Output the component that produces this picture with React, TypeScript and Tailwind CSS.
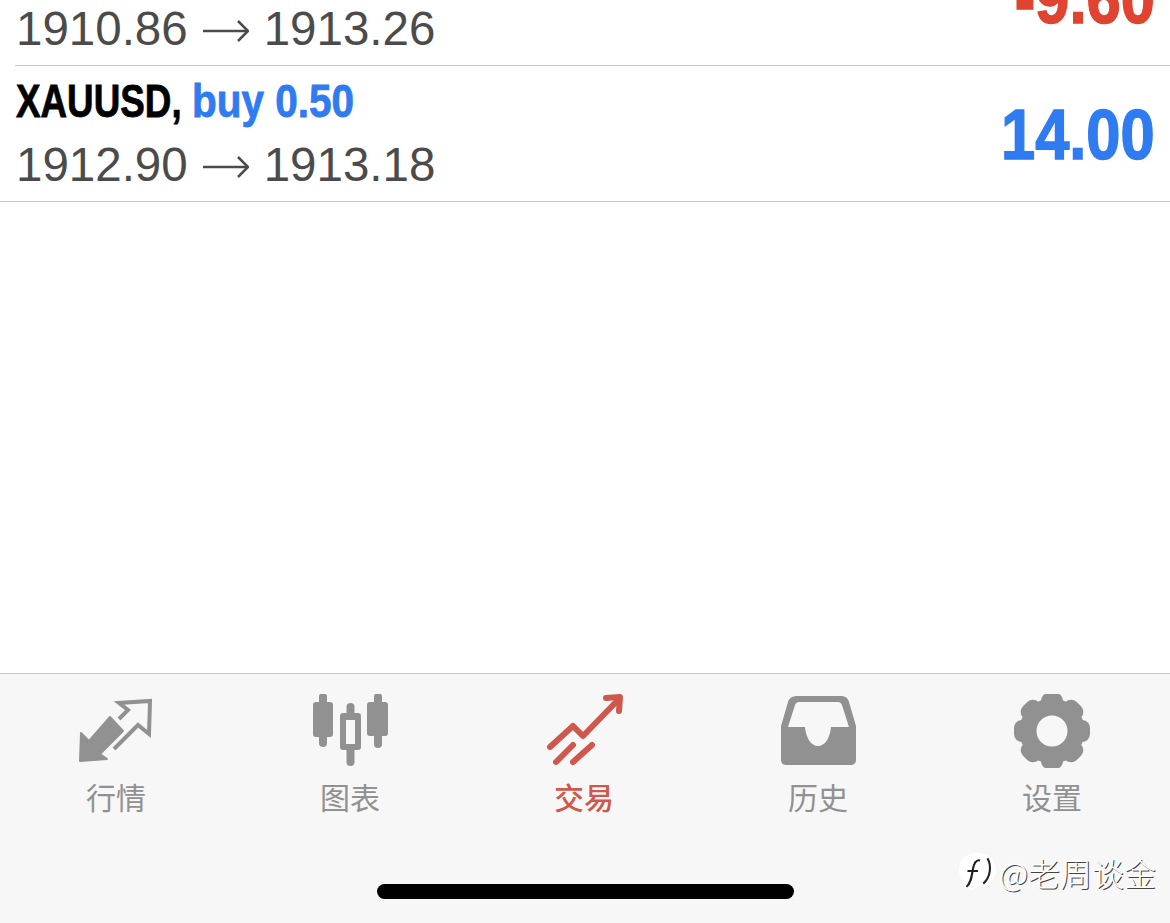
const sans = "font-['Liberation_Sans',Arial,sans-serif]"

const Arrow = () => (
  <svg width="46" height="24" viewBox="0 0 46 24" fill="none" stroke="#4b4b4b" strokeWidth="2.5" className="mx-[15px] mb-[12px] shrink-0">
    <path d="M0 12H44" />
    <path d="M35 2 45 12 35 22" />
  </svg>
)

const Trade = ({ symbol, side, from, to, profit, profitColor, inset, height }: { symbol: string; side: string; from: string; to: string; profit: string; profitColor: string; inset?: boolean; height: string }) => {
  return (
    <div className={`${height} relative overflow-hidden flex flex-col justify-end`}>
      <div className="flex justify-between items-end pl-[15px] pr-[15px]">
        <div className="flex flex-col">
          <div className="h-[64px] pb-[11px] flex items-end whitespace-nowrap text-[46px] leading-[52px] font-bold [-webkit-text-stroke:0.8px]">
            <span className="inline-block w-[177px] ml-[1px] mr-[-1px] origin-left scale-x-[0.8] text-black">{symbol}</span>
            <span className="inline-block origin-left scale-x-[0.88] text-[#2f7bf0]">{side}</span>
          </div>
          <div className="h-[63px] pl-[1px] pb-[10px] flex items-end whitespace-nowrap text-[47.5px] leading-[52px] text-[#4b4b4b]">
            <span>{from}</span>
            <Arrow />
            <span>{to}</span>
          </div>
        </div>
        <div className={`mb-[30px] origin-right scale-x-[0.865] text-[71px] leading-[72px] font-bold [-webkit-text-stroke:1.5px] ${profitColor}`}>{profit}</div>
      </div>
      <div className={`h-px shrink-0 bg-[#c6c6c6] ${inset ? 'ml-[15px]' : ''}`}></div>
    </div>
  )
}

const Markets = () => (
  <svg width="80" height="74" viewBox="77 694 80 74" fill="#919191">
    <path d="M80 761 81 733 89 741 110 717 123 731 100 754 107 759Z" stroke="#919191" strokeWidth="2" strokeLinejoin="round" />
    <path d="M119 719 128 710 119 703 150 701 149 734 138 725 114 749" fill="none" stroke="#919191" strokeWidth="4" />
  </svg>
)

const Charts = () => (
  <svg width="80" height="74" viewBox="311 694 80 74" fill="#919191">
    <rect x="319" y="693" width="8" height="54" rx="4" />
    <rect x="313" y="702" width="20" height="35" rx="3" />
    <rect x="346.500" y="703" width="8" height="14" rx="4" />
    <rect x="346.500" y="745" width="8" height="21" rx="4" />
    <path fillRule="evenodd" d="M343 713H358a3 3 0 0 1 3 3V747a3 3 0 0 1-3 3H343a3 3 0 0 1-3-3V716a3 3 0 0 1 3-3ZM346 720V744H355V720Z" />
    <rect x="374" y="693" width="8" height="55" rx="4" />
    <rect x="367" y="702" width="21" height="34" rx="3" />
  </svg>
)

const Trading = () => (
  <svg width="80" height="74" viewBox="545 694 80 74" fill="none" stroke="#d0574c" strokeWidth="6" strokeLinecap="round" strokeLinejoin="round">
    <path d="M550 747 573 726 583 736 618 700" />
    <path d="M606 698 620 697 619 711" />
    <path d="M556 762 573 745" />
    <path d="M573 762 592 745" />
  </svg>
)

const History = () => (
  <svg width="80" height="74" viewBox="779 694 80 74" fill="#919191">
    <path fillRule="evenodd" d="M797 696H841C845 696 848 698 849 702L856 726V760C856 763 854 765 851 765H786C783 765 781 763 781 760V726L788 702C789 698 793 696 797 696ZM799 702C797 702 796 703 795 705L788 727H805C806 738 811 746 818 746C825 746 830 738 831 727H849L842 705C841 703 840 702 838 702Z" />
  </svg>
)

const Settings = () => (
  <svg width="80" height="74" viewBox="1013 694 80 74" fill="#919191">
    <circle cx="1052" cy="731" r="24" fill="none" stroke="#919191" strokeWidth="17" />
    {[0, 45, 90, 135, 180, 225, 270, 315].map((a) => (
      <rect key={a} x="1041" y="693" width="22" height="16" rx="8" transform={`rotate(${a} 1052 731)`} />
    ))}
  </svg>
)

const tabs = [
  { label: '行情', icon: <Markets /> },
  { label: '图表', icon: <Charts /> },
  { label: '交易', icon: <Trading />, active: true },
  { label: '历史', icon: <History /> },
  { label: '设置', icon: <Settings /> },
]

const App = () => {
  return (
    <div className={`${sans} relative w-[1170px] h-[923px] overflow-hidden bg-white flex flex-col`}>
      <Trade height="h-[66px]" inset symbol="XAUUSD," side="sell 0.50" from="1910.86" to="1913.26" profit="-9.60" profitColor="text-[#e0432f]" />
      <Trade height="h-[136px]" symbol="XAUUSD," side="buy 0.50" from="1912.90" to="1913.18" profit="14.00" profitColor="text-[#2f7bf0]" />
      <div className="flex-1"></div>
      <div className="h-[250px] border-t border-[#c6c6c6] bg-[#f7f7f7] flex flex-col">
        <div className="grid grid-cols-5 pt-[20px]">
          {tabs.map((t) => (
            <div key={t.label} className="flex flex-col items-center">
              {t.icon}
              <span className={`mt-[10px] mr-[2px] text-[30px] leading-[36px] font-['Noto_Sans_CJK_SC','Noto_Sans_CJK_JP',sans-serif] ${t.active ? 'font-medium text-[#d0574c]' : 'text-[#919191]'}`}>{t.label}</span>
            </div>
          ))}
        </div>
        <div className="mt-[70px] mx-auto w-[417px] h-[15px] rounded-full bg-black"></div>
      </div>
      {/* watermark over the tab bar */}
      <div className="absolute left-[959px] top-[852px] flex items-center gap-[2px] text-white">
        <svg width="38" height="40" viewBox="0 0 36 38">
          <path d="M16 1C27 1 35 8 35 17 35 27 26 32 17 33 14 36 11 37 9 36 10 34 10 33 9 32 3 29 0 24 0 17 0 8 7 1 16 1Z" fill="#fff" />
          <path d="M27 6C31 13 30 24 23 30" fill="none" stroke="#222" strokeWidth="2" />
          <path d="M20 8C16 7 14 11 13 17 12 24 11 30 7 33M8 18H18" fill="none" stroke="#222" strokeWidth="2" />
        </svg>
        <span className="text-[32px] leading-[38px] font-light font-['Noto_Sans_CJK_SC',sans-serif] [text-shadow:1px_1px_0_#444]">@老周谈金</span>
      </div>
    </div>
  )
}

export default App
